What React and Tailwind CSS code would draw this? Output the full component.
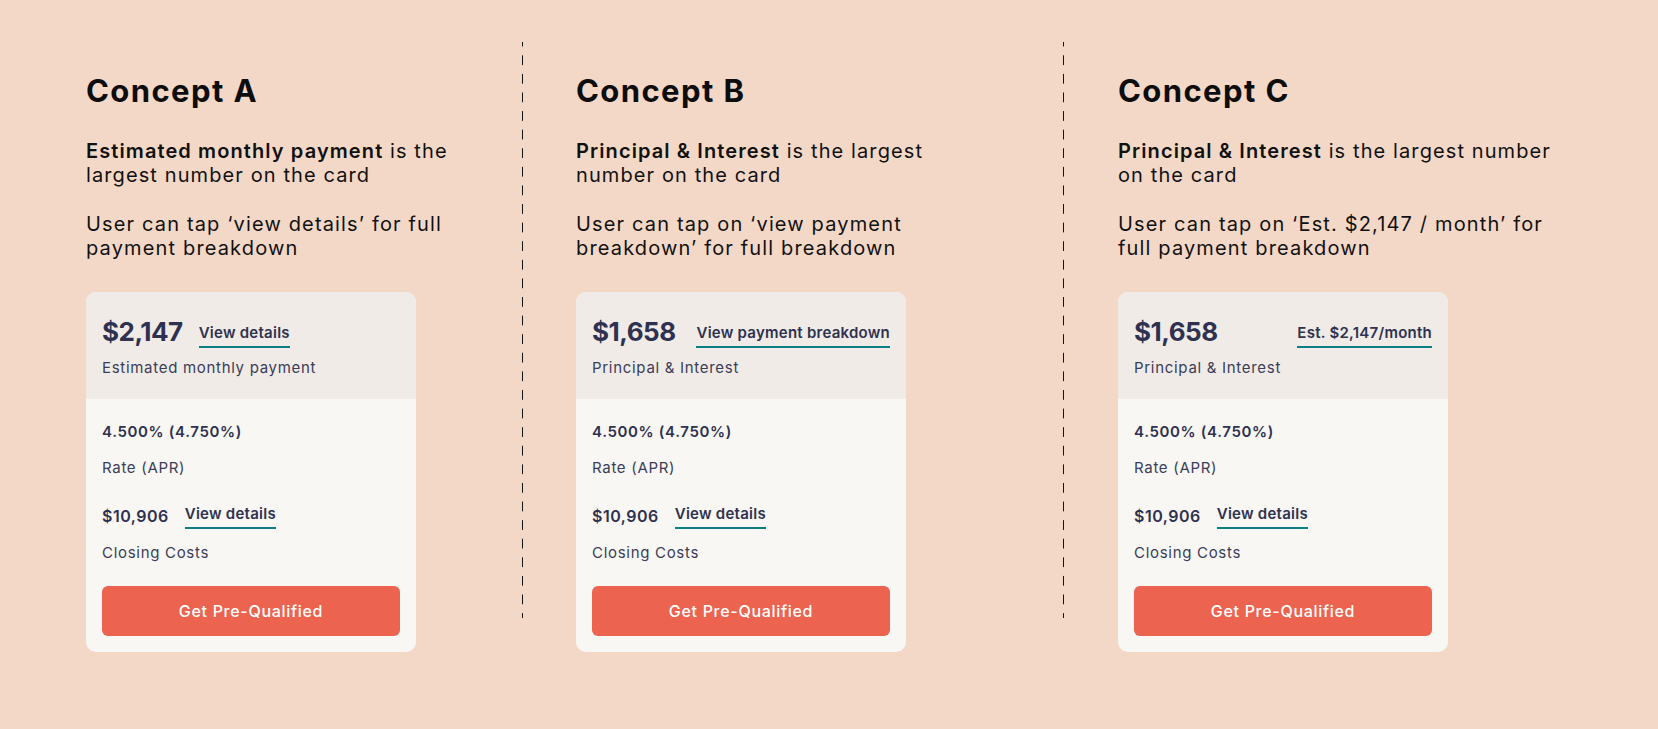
const font = { fontFamily: "Inter, 'Liberation Sans', sans-serif" };

const Link = ({ children, className = "" }) => (
  <span
    className={`inline-block whitespace-nowrap border-b-2 border-[#0b7d84] pb-[3px] text-[15px] font-semibold leading-5 tracking-[0.25px] text-[#2e3150] ${className}`}
  >
    {children}
  </span>
);

const PaymentCard = ({ amount, label, link, spread }) => (
  <div className="w-[330px] overflow-hidden rounded-[10px] bg-[#f9f7f4]">
    {/* Top block */}
    <div className="bg-[#f0ebe6] px-4 pb-[21px] pt-6">
      <div className={`flex items-start ${spread ? "justify-between" : "gap-4"}`}>
        <span className="text-[26px] font-bold leading-8 tracking-[-0.5px] text-[#2e3150]">
          {amount}
        </span>
        <Link className="mt-[7px]">{link}</Link>
      </div>
      <p className="mt-[10px] text-[15px] leading-5 tracking-[0.7px] text-[#3a3d5a]">{label}</p>
    </div>

    {/* Body */}
    <div className="px-4 pb-4 pt-[23px]">
      <p className="text-[15px] font-semibold leading-5 tracking-[0.65px] text-[#2e3150]">
        4.500% (4.750%)
      </p>
      <p className="mt-4 text-[15px] leading-5 tracking-[0.7px] text-[#3a3d5a]">Rate (APR)</p>

      <div className="mt-[28px] flex items-start gap-4">
        <span className="text-[16px] font-semibold leading-5 tracking-[0.5px] text-[#2e3150]">
          $10,906
        </span>
        <Link className="-mt-0.5">View details</Link>
      </div>
      <p className="mt-[14px] text-[15px] leading-5 tracking-[0.7px] text-[#3a3d5a]">
        Closing Costs
      </p>

      <button className="mt-[23px] flex h-[50px] w-full items-center justify-center rounded-md bg-[#ec6350] text-[16px] font-medium tracking-[0.7px] text-white">
        Get Pre-Qualified
      </button>
    </div>
  </div>
);

const Divider = () => (
  <div className="mt-[42px] h-[576px] w-px flex-none bg-[linear-gradient(to_bottom,#141414_50%,transparent_50%)] bg-[length:1px_18.6px] bg-[position:0_-5.3px]" />
);

const Concept = ({ title, line1, line2, card, className = "" }) => (
  <div className={`flex-none pt-[73px] ${className}`}>
    <h2 className="text-[31px] font-bold leading-9 tracking-[1.4px] text-[#0d0d0d]">
      {title}
    </h2>
    <p className="mt-[30px] whitespace-nowrap text-[20px] leading-6 tracking-[1.1px] text-[#111]">
      {line1}
    </p>
    <p className="mt-[25px] whitespace-nowrap text-[20px] leading-6 tracking-[1.15px] text-[#111]">
      {line2}
    </p>
    <div className="mt-[32px]">
      <PaymentCard {...card} />
    </div>
  </div>
);

export default function App() {
  return (
    <div style={font} className="flex h-[729px] w-full bg-[#f4d8c7] pl-[86px]">
      <Concept
        className="w-[436px]"
        title="Concept A"
        line1={
          <>
            <b className="font-semibold">Estimated monthly payment</b> is the
            <br />
            largest number on the card
          </>
        }
        line2={
          <>
            User can tap ‘view details’ for full
            <br />
            payment breakdown
          </>
        }
        card={{
          amount: "$2,147",
          label: "Estimated monthly payment",
          link: "View details",
        }}
      />
      <Divider />
      <Concept
        className="w-[540px] pl-[53px]"
        title="Concept B"
        line1={
          <>
            <b className="font-semibold">Principal &amp; Interest</b> is the largest
            <br />
            number on the card
          </>
        }
        line2={
          <>
            User can tap on ‘view payment
            <br />
            breakdown’ for full breakdown
          </>
        }
        card={{
          amount: "$1,658",
          label: "Principal & Interest",
          link: "View payment breakdown",
          spread: true,
        }}
      />
      <Divider />
      <Concept
        className="pl-[54px]"
        title="Concept C"
        line1={
          <>
            <b className="font-semibold">Principal &amp; Interest</b> is the largest number
            <br />
            on the card
          </>
        }
        line2={
          <>
            User can tap on ‘Est. $2,147 / month’ for
            <br />
            full payment breakdown
          </>
        }
        card={{
          amount: "$1,658",
          label: "Principal & Interest",
          link: "Est. $2,147/month",
          spread: true,
        }}
      />
    </div>
  );
}
